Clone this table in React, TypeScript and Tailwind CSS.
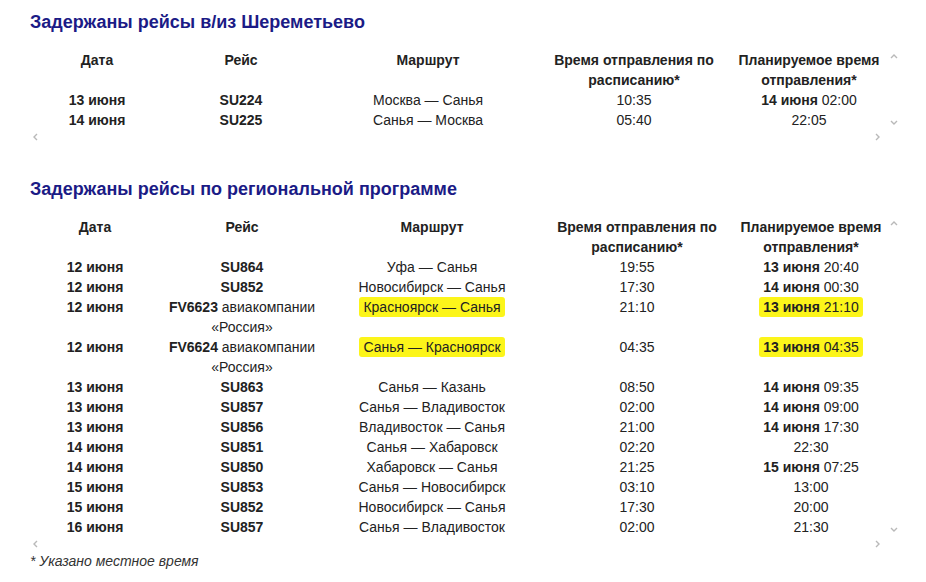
import React from "react";

type Row = {
  date: string;
  flight: string;
  carrier?: string;
  route: string;
  sched: string;
  planDate?: string;
  planTime: string;
  mark?: boolean;
};

const sheremetyevo: Row[] = [
  { date: "13 июня", flight: "SU224", route: "Москва — Санья", sched: "10:35", planDate: "14 июня", planTime: "02:00" },
  { date: "14 июня", flight: "SU225", route: "Санья — Москва", sched: "05:40", planTime: "22:05" },
];

const regional: Row[] = [
  { date: "12 июня", flight: "SU864", route: "Уфа — Санья", sched: "19:55", planDate: "13 июня", planTime: "20:40" },
  { date: "12 июня", flight: "SU852", route: "Новосибирск — Санья", sched: "17:30", planDate: "14 июня", planTime: "00:30" },
  { date: "12 июня", flight: "FV6623", carrier: "авиакомпании «Россия»", route: "Красноярск — Санья", sched: "21:10", planDate: "13 июня", planTime: "21:10", mark: true },
  { date: "12 июня", flight: "FV6624", carrier: "авиакомпании «Россия»", route: "Санья — Красноярск", sched: "04:35", planDate: "13 июня", planTime: "04:35", mark: true },
  { date: "13 июня", flight: "SU863", route: "Санья — Казань", sched: "08:50", planDate: "14 июня", planTime: "09:35" },
  { date: "13 июня", flight: "SU857", route: "Санья — Владивосток", sched: "02:00", planDate: "14 июня", planTime: "09:00" },
  { date: "13 июня", flight: "SU856", route: "Владивосток — Санья", sched: "21:00", planDate: "14 июня", planTime: "17:30" },
  { date: "14 июня", flight: "SU851", route: "Санья — Хабаровск", sched: "02:20", planTime: "22:30" },
  { date: "14 июня", flight: "SU850", route: "Хабаровск — Санья", sched: "21:25", planDate: "15 июня", planTime: "07:25" },
  { date: "15 июня", flight: "SU853", route: "Санья — Новосибирск", sched: "03:10", planTime: "13:00" },
  { date: "15 июня", flight: "SU852", route: "Новосибирск — Санья", sched: "17:30", planTime: "20:00" },
  { date: "16 июня", flight: "SU857", route: "Санья — Владивосток", sched: "02:00", planTime: "21:30" },
];

function Chevron({ dir }: { dir: "up" | "down" | "left" | "right" }) {
  const pts = {
    up: "1,5 4,2 7,5",
    down: "1,2 4,5 7,2",
    left: "5,1 2,4 5,7",
    right: "2,1 5,4 2,7",
  }[dir];
  return (
    <svg width="8" height="8" viewBox="0 0 8 8" className="block">
      <polyline points={pts} fill="none" stroke="#b9b9b9" strokeWidth="1.4" />
    </svg>
  );
}

function Mark({ on, children }: { on?: boolean; children: React.ReactNode }) {
  if (!on) return <>{children}</>;
  return (
    <span className="-mx-[4px] rounded-[3px] bg-[#fcf51a] px-[4px] py-[2px]">{children}</span>
  );
}

function FlightTable({ rows, cols }: { rows: Row[]; cols: string[] }) {
  return (
    <div className="flex">
      <div className="w-[858px]">
        <table className="w-[858px] table-fixed border-collapse text-center text-[14px] leading-[20px] text-[#222]">
          <colgroup>
            {cols.map((c, i) => (
              <col key={i} className={c} />
            ))}
          </colgroup>
          <thead>
            <tr className="align-top font-bold">
              <th className="p-0">Дата</th>
              <th className="p-0">Рейс</th>
              <th className="p-0">Маршрут</th>
              <th className="p-0">Время отправления по расписанию*</th>
              <th className="p-0">Планируемое время отправления*</th>
            </tr>
          </thead>
          <tbody>
            {rows.map((r, i) => (
              <tr key={i} className="align-top">
                <td className="p-0 font-bold">{r.date}</td>
                <td className="p-0">
                  <b>{r.flight}</b>
                  {r.carrier && <span> {r.carrier}</span>}
                </td>
                <td className="p-0">
                  <Mark on={r.mark}>{r.route}</Mark>
                </td>
                <td className="p-0">{r.sched}</td>
                <td className="p-0">
                  <Mark on={r.mark}>
                    {r.planDate && <b>{r.planDate} </b>}
                    {r.planTime}
                  </Mark>
                </td>
              </tr>
            ))}
          </tbody>
        </table>
        <div className="flex h-[14px] items-center justify-between pl-[2px] pr-[6px]">
          <Chevron dir="left" />
          <Chevron dir="right" />
        </div>
      </div>
      <div className="flex h-[calc(100%-14px)] w-[12px] flex-col justify-between pl-[2px] pt-[3px] pb-[3px]">
        <Chevron dir="up" />
        <Chevron dir="down" />
      </div>
    </div>
  );
}

function Section({ title, rows, cols }: { title: string; rows: Row[]; cols: string[] }) {
  return (
    <section>
      <h2 className="text-[18px] font-bold leading-[22px] text-[#1b1b86]">{title}</h2>
      <div className="mt-[17px] flex">
        <FlightTable rows={rows} cols={cols} />
      </div>
    </section>
  );
}

const colsTop = ["w-[134px]", "w-[154px]", "w-[220px]", "w-[192px]", "w-[158px]"];
const colsRegional = ["w-[130px]", "w-[164px]", "w-[216px]", "w-[194px]", "w-[154px]"];

export default function App() {
  return (
    <div
      className="h-[582px] w-[926px] overflow-hidden bg-white pl-[30px] pt-[11px]"
      style={{ fontFamily: '"Liberation Sans", Arial, sans-serif' }}
    >
      <Section title="Задержаны рейсы в/из Шереметьево" rows={sheremetyevo} cols={colsTop} />
      <div className="h-[34px]" />
      <Section title="Задержаны рейсы по региональной программе" rows={regional} cols={colsRegional} />
      <p className="text-[14px] italic leading-[20px] text-[#333]">* Указано местное время</p>
    </div>
  );
}
